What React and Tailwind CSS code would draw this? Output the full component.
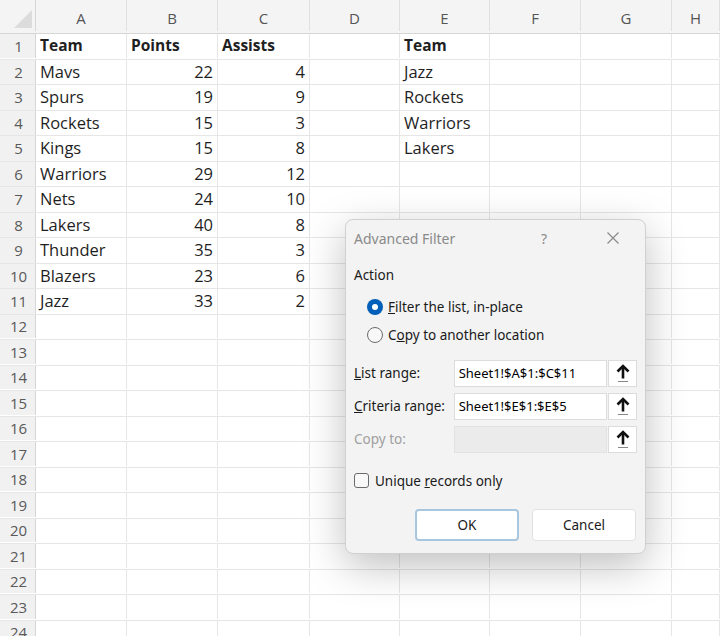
import React from "react";

const cols = ["A", "B", "C", "D", "E", "F", "G", "H"];
const gridCols = "grid-cols-[36px_91px_91px_92px_90px_90px_91px_91px_1fr]";

const data = [
  ["Team", "Points", "Assists", "", "Team"],
  ["Mavs", "22", "4", "", "Jazz"],
  ["Spurs", "19", "9", "", "Rockets"],
  ["Rockets", "15", "3", "", "Warriors"],
  ["Kings", "15", "8", "", "Lakers"],
  ["Warriors", "29", "12"],
  ["Nets", "24", "10"],
  ["Lakers", "40", "8"],
  ["Thunder", "35", "3"],
  ["Blazers", "23", "6"],
  ["Jazz", "33", "2"],
];

function UpArrow() {
  return (
    <svg width="16" height="20" viewBox="0 0 16 20" fill="none">
      <path d="M8 3 L8 15.5" stroke="#111" strokeWidth="2.6" />
      <path d="M2.5 8.5 L8 3 L13.5 8.5" stroke="#111" strokeWidth="2.6" fill="none" />
      <path d="M3 18.5 L13 18.5" stroke="#888" strokeWidth="1" />
    </svg>
  );
}

function RangeRow({ label, value, disabled }) {
  return (
    <div className="flex items-center h-[27px]">
      <div className={`w-[100px] ${disabled ? "text-[#a0a0a0]" : "text-[#1a1a1a]"}`}>{label}</div>
      <div
        className={`w-[154px] h-[27px] border flex items-center pl-[4px] text-[13px] ${
          disabled ? "bg-[#ebebeb] border-[#e2e2e2]" : "bg-white border-[#dcdcdc]"
        }`}
      >
        {value}
      </div>
      <div className="ml-[1px] w-[29px] h-[27px] bg-white border border-[#dcdcdc] flex items-center justify-center">
        <UpArrow />
      </div>
    </div>
  );
}

export default function App() {
  const rows = Array.from({ length: 24 }, (_, i) => data[i] || []);

  return (
    <div className="relative w-[720px] h-[636px] overflow-hidden bg-white font-['Open_Sans',sans-serif]">
      {/* column headers */}
      <div className={`grid ${gridCols} h-[34px] bg-[#f4f4f4] border-b border-[#d6d6d6]`}>
        <div className="relative border-r border-[#d6d6d6]">
          <div className="absolute right-[3px] bottom-[3px] w-0 h-0 border-l-[18px] border-l-transparent border-b-[18px] border-b-[#dcdcdc]" />
        </div>
        {cols.map((c) => (
          <div
            key={c}
            className="flex items-center justify-center pt-[6px] text-[15px] text-[#555] border-r border-[#e0e0e0]"
          >
            {c}
          </div>
        ))}
        <div />
      </div>

      {/* rows */}
      {rows.map((r, i) => (
        <div key={i} className={`grid ${gridCols} h-[25.5px] border-b border-[#e6e6e6]`}>
          <div className="flex items-center justify-center pl-[2px] bg-[#f1f1f1] border-r border-[#d6d6d6] text-[#595959] text-[15px]">
            {i + 1}
          </div>
          {cols.map((c, j) => {
            const v = r[j] || "";
            const isNum = /^\d+$/.test(v);
            return (
              <div
                key={c}
                className={`flex items-center px-[4px] border-r border-[#e6e6e6] text-[#1f1f1f] whitespace-nowrap ${
                  isNum ? "justify-end" : ""
                } ${i === 0 ? "font-bold text-[15.5px]" : "text-[16.5px]"}`}
              >
                {v}
              </div>
            );
          })}
          <div />
        </div>
      ))}

      {/* Advanced Filter dialog */}
      <div className="absolute left-[345px] top-[219px] w-[301px] h-[335px] rounded-[8px] bg-[#f3f3f3] border border-[#d0d0d0] shadow-[0_12px_40px_rgba(0,0,0,0.25)] text-[13.5px] font-['Noto_Sans',sans-serif] px-[8px]">
        <div className="flex items-center h-[36px] text-[#8a8a8a] text-[14px]">
          <span className="flex-1">Advanced Filter</span>
          <span className="w-[14px] text-center mr-[55px]">?</span>
          <svg width="14" height="14" viewBox="0 0 14 14" className="mr-[17px]">
            <path d="M1.5 1.5 L12.5 12.5 M12.5 1.5 L1.5 12.5" stroke="#8a8a8a" strokeWidth="1.2" />
          </svg>
        </div>
        <div className="mt-[9px] text-[#1a1a1a]">Action</div>
        <div className="mt-[12px] ml-[13px] flex items-center gap-[5px] text-[#1a1a1a]">
          <div className="w-[16px] h-[16px] rounded-full bg-[#005fb8] flex items-center justify-center">
            <div className="w-[6px] h-[6px] rounded-full bg-white" />
          </div>
          <span>
            <u>F</u>ilter the list, in-place
          </span>
        </div>
        <div className="mt-[7px] ml-[13px] flex items-center gap-[5px] text-[#1a1a1a]">
          <div className="w-[16px] h-[16px] rounded-full border border-[#6b6b6b] bg-[#f8f8f8]" />
          <span>
            C<u>o</u>py to another location
          </span>
        </div>

        <div className="mt-[15px] flex flex-col gap-[6px]">
          <RangeRow
            label={
              <span>
                <u>L</u>ist range:
              </span>
            }
            value="Sheet1!$A$1:$C$11"
          />
          <RangeRow
            label={
              <span>
                <u>C</u>riteria range:
              </span>
            }
            value="Sheet1!$E$1:$E$5"
          />
          <RangeRow label="Copy to:" value="" disabled />
        </div>

        <div className="mt-[18px] flex items-center gap-[6px] text-[#1a1a1a]">
          <div className="w-[15px] h-[15px] rounded-[3px] border border-[#6b6b6b] bg-[#f8f8f8]" />
          <span>
            Unique <u>r</u>ecords only
          </span>
        </div>

        <div className="mt-[18px] flex justify-end gap-[13px] pr-[1px]">
          <div className="w-[104px] h-[32px] rounded-[4px] bg-white border-2 border-[#a9c6df] flex items-center justify-center text-[#1a1a1a]">
            OK
          </div>
          <div className="w-[104px] h-[32px] rounded-[4px] bg-white border border-[#e2e2e2] flex items-center justify-center text-[#1a1a1a]">
            Cancel
          </div>
        </div>
      </div>
    </div>
  );
}
